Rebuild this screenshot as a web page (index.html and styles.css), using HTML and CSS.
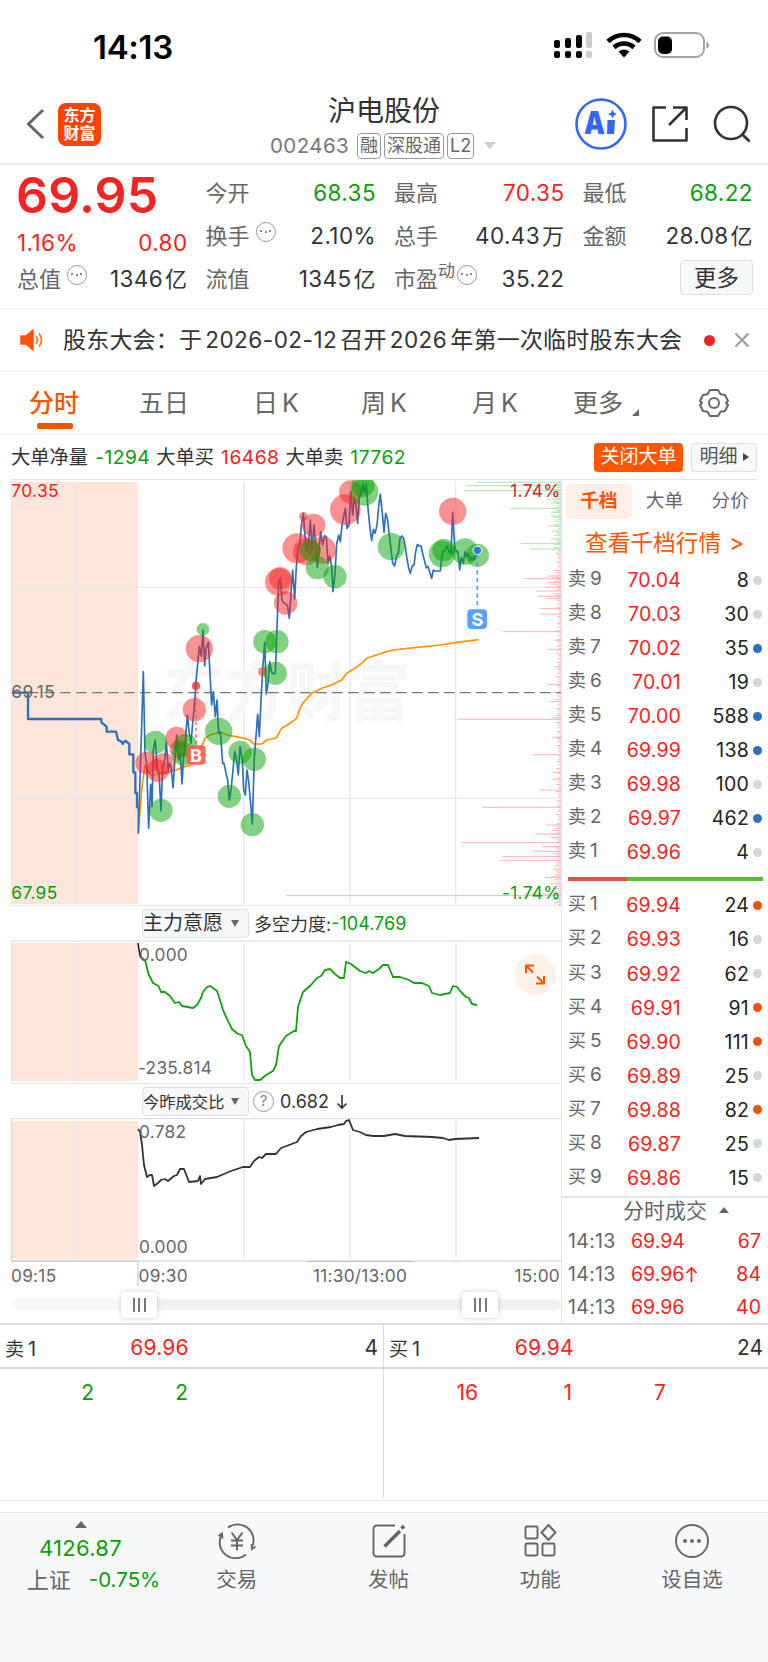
FILE: index.html
```html
<!DOCTYPE html>
<html lang="zh-CN">
<head>
  <meta charset="UTF-8">
  <title>沪电股份 002463</title>
  <meta name="viewport" content="width=device-width, initial-scale=1.0">
  <link rel="stylesheet" href="styles.css">
</head>
<body>
<div class="status-bar">
  <span class="clock">14:13</span>
  <svg class="status-icons" width="160" height="30" viewBox="0 0 160 30">
    <g fill="#000">
      <rect x="1" y="10" width="6" height="8" rx="2"/><rect x="12" y="8" width="6" height="10" rx="2"/><rect x="23" y="5" width="6" height="13" rx="2"/>
      <rect x="1" y="21" width="6" height="7" rx="2"/><rect x="12" y="21" width="6" height="7" rx="2"/><rect x="23" y="21" width="6" height="7" rx="2"/>
    </g>
    <g fill="#ccc"><rect x="33" y="2" width="6" height="16" rx="2"/><rect x="33" y="21" width="6" height="7" rx="2"/></g>
    <g fill="none" stroke="#000" stroke-width="4.6">
      <path d="M55 11.500a23 23 0 0 1 32 0"/>
      <path d="M61 17.500a14.500 14.500 0 0 1 20 0"/>
    </g>
    <path d="M65.500 21.500a9 9 0 0 1 11 0L71 27.500z"/>
    <rect x="102" y="3" width="49" height="24" rx="8" fill="none" stroke="#a3a3a3" stroke-width="2"/>
    <rect x="105" y="6.500" width="14" height="17.500" rx="5"/>
    <path d="M153.500 11.500q5 3.500 0 7.500z" fill="#999"/>
  </svg>
</div>

<div class="header">
  <svg class="back" width="20" height="32" viewBox="0 0 20 32"><path d="M17 2L2.500 16 17 30" fill="none" stroke="#666" stroke-width="3"/></svg>
  <div class="logo"><span>东方</span><span>财富</span></div>
  <div class="title">
    <h1>沪电股份</h1>
    <div class="sub"><span class="code">002463</span><span class="tag">融</span><span class="tag">深股通</span><span class="tag">L2</span><i class="tri-down"></i></div>
  </div>
  <div class="tools">
    <svg width="52" height="52" viewBox="0 0 52 52">
      <circle cx="26" cy="26" r="24.500" fill="none" stroke="#36f" stroke-width="2.600"/>
      <text x="9" y="36" class="ai-text" textLength="21" lengthAdjust="spacingAndGlyphs">A</text>
      <path d="M32.500 22h7.500l-1 14h-7z" fill="#36f"/>
      <path d="M37.500 11.500l1.400 3.100 3.100 1.400-3.100 1.400-1.400 3.100-1.400-3.100-3.100-1.400 3.100-1.400z" fill="#36f"/>
    </svg>
    <svg width="38" height="38" viewBox="0 0 38 38" fill="none" stroke="#333" stroke-width="2.600" stroke-linejoin="round">
      <path d="M15 2.500H2.500V35.500H35.500V23M22 2.500H35.500V15M35 3L18 20"/>
    </svg>
    <svg width="38" height="38" viewBox="0 0 38 38" fill="none" stroke="#333" stroke-width="2.600">
      <circle cx="18" cy="18" r="16"/><path d="M29 29l7.500 7.500"/>
    </svg>
  </div>
</div>

<div class="quote">
  <div class="col">
    <div class="price red">69.95</div>
    <div class="row change red"><span>1.16%</span><span>0.80</span></div>
    <div class="row"><label>总值<i class="more-dot"></i></label><span>1346<em>亿</em></span></div>
  </div>
  <div class="col">
    <div class="row"><label>今开</label><span class="green">68.35</span></div>
    <div class="row"><label>换手<i class="more-dot"></i></label><span>2.10%</span></div>
    <div class="row"><label>流值</label><span>1345<em>亿</em></span></div>
  </div>
  <div class="col">
    <div class="row"><label>最高</label><span class="red">70.35</span></div>
    <div class="row"><label>总手</label><span>40.43<em>万</em></span></div>
    <div class="row"><label>市盈<sup>动</sup><i class="more-dot tight"></i></label><span>35.22</span></div>
  </div>
  <div class="col">
    <div class="row"><label>最低</label><span class="green">68.22</span></div>
    <div class="row"><label>金额</label><span>28.08<em>亿</em></span></div>
    <div class="row end"><button class="btn-more">更多</button></div>
  </div>
</div>

<div class="notice">
  <svg width="25" height="22" viewBox="0 0 25 22"><path d="M1 7h5l7-6v20l-7-6H1z" fill="#ff5500" stroke="#ff5500" stroke-width="1.500" stroke-linejoin="round"/><path d="M16 7q3 4 0 8M19 4.500q5 6.500 0 13" fill="none" stroke="#ff7a33" stroke-width="1.800"/></svg>
  <p>股东大会：于<b>2026-02-12</b>召开<b>2026</b>年第一次临时股东大会</p>
  <i class="red-dot"></i>
  <svg width="16" height="16" viewBox="0 0 16 16"><path d="M1.500 1.500l13 13M14.500 1.500l-13 13" stroke="#999" stroke-width="1.800"/></svg>
</div>

<div class="tabs">
  <a class="active">分时</a><a>五日</a><a>日<b>K</b></a><a>周<b>K</b></a><a>月<b>K</b></a><a class="drop">更多</a>
  <svg width="30" height="30" viewBox="0 0 30 30" fill="none" stroke="#666" stroke-width="2" stroke-linejoin="round">
    <path d="M11 2h8l2.500 4.200 4.500.8 3 6-2 2 2 2-3 6-4.500.8L19 28h-8l-2.500-4.200-4.500-.8-3-6 2-2-2-2 3-6 4.500-.8z"/><circle cx="15" cy="15" r="5"/>
  </svg>
</div>

<div class="big-order">
  <span>大单净量</span><b class="green">-1294</b><span>大单买</span><b class="red">16468</b><span>大单卖</span><b class="green">17762</b>
  <button class="btn-close">关闭大单</button><button class="btn-detail">明细<i></i></button>
</div>

<div class="board">
  <div class="charts">
    <!-- price chart, drawn in thirds of a pixel -->
    <svg class="chart" width="561" height="426" viewBox="0 30 1683 1278">
      <rect x="34" y="36" width="380" height="1266" fill="#fce6da"/>
      <path d="M224 36V1302M732 36V1302M1050 36V1302M1367 36V1302M34 352H1683M34 985H1683" stroke="#e4e8f0" stroke-width="4" fill="none"/>
      <path d="M34 30V1308M34 1306H1683" stroke="#e2e4ea" stroke-width="3" fill="none"/>
      <text x="488" y="738" class="watermark" textLength="742" lengthAdjust="spacingAndGlyphs">东方财富</text>
      <g id="bars" fill="none" stroke-width="3"></g>
      <path d="M36 668H1683" stroke="#777" stroke-width="4" stroke-dasharray="32 16" fill="none"/>
      <polyline class="avg" points="415,1088 425,960 435,885 445,905 455,918 470,912 490,908 510,905 530,900 545,892 570,887 590,870 605,830 615,805 630,795 660,787 690,797 720,802 750,810 760,822 785,822 800,810 828,804 845,775 862,765 890,745 900,715 910,698 935,670 965,655 995,645 1025,630 1040,610 1060,598 1085,580 1100,565 1120,558 1150,548 1180,540 1250,532 1320,525 1370,517 1436,509"/>
      <polyline class="line pre" points="36,668 84,668 84,747 304,747 304,757 320,770 320,785 348,785 354,810 365,815 368,822 376,812 388,822 388,853 400,853 400,907 406,907 406,969 411,969 411,1011 415,1013"/>
      <polyline class="line" points="415,1013 415,1090 430,605 435,850 440,880 446,1075 452,943 456,1010 460,840 466,810 472,900 477,910 483,1022 488,885 493,880 499,817 505,900 509,880 514,895 519,953 524,880 530,795 536,870 541,850 546,942 551,860 557,800 562,735 568,790 573,820 578,760 583,710 588,635 598,530 604,558 609,480 614,588 618,535 621,530 625,517 635,705 640,665 646,740 651,690 656,790 661,785 668,880 672,880 678,910 683,930 688,990 693,960 699,900 704,845 709,865 715,915 720,830 727,870 731,960 736,975 741,900 746,935 751,990 757,1063 763,860 768,800 773,733 778,800 783,690 788,600 794,517 799,672 804,640 809,575 814,605 820,612 826,610 830,500 836,335 841,325 846,390 852,400 858,402 863,410 868,445 873,370 878,300 884,387 889,290 894,235 900,220 904,165 910,130 915,200 920,245 926,215 931,150 936,240 942,165 947,230 952,293 957,240 962,185 968,225 974,197 979,200 984,280 989,258 995,290 999,365 1005,310 1010,222 1016,195 1021,215 1026,165 1036,115 1041,175 1047,165 1052,65 1058,135 1063,85 1068,105 1073,160 1078,80 1084,70 1089,40 1094,70 1099,40 1104,115 1110,175 1115,212 1120,178 1125,190 1131,165 1136,110 1141,72 1147,130 1152,187 1157,130 1163,150 1168,195 1178,280 1184,288 1190,255 1195,250 1200,205 1205,198 1211,205 1216,230 1220,260 1226,295 1231,310 1236,290 1242,285 1247,245 1252,223 1258,228 1263,228 1268,250 1273,270 1279,293 1284,290 1289,305 1295,325 1300,300 1305,303 1321,303 1326,255 1332,242 1342,228 1347,245 1353,250 1358,127 1364,230 1369,245 1374,245 1379,300 1384,262 1390,280 1395,245 1400,260 1405,250 1411,270 1416,262 1421,270 1426,255 1432,242"/>
      <g id="trades"></g>
      <path d="M588 660V825" stroke="#ff5b4d" stroke-width="4" stroke-dasharray="10 9"/>
      <rect x="559" y="826" width="58" height="58" rx="12" fill="#fa5c50" fill-opacity=".9"/>
      <text x="588" y="876" class="mark">B</text>
      <path d="M1432 255V417" stroke="#5b9fff" stroke-width="5" stroke-dasharray="13 10"/>
      <circle cx="1432" cy="241" r="13" fill="#2483d0" stroke="#fff" stroke-width="3"/>
      <rect x="1402" y="418" width="59" height="59" rx="12" fill="#5b9fff"/>
      <text x="1432" y="468" class="mark">S</text>
      <g class="label">
        <text x="34" y="81" fill="#f52323">70.35</text>
        <text x="34" y="685" fill="#666">69.15</text>
        <text x="34" y="1287" fill="#0a9d0a">67.95</text>
        <text x="1682" y="81" fill="#d92323" text-anchor="end">1.74%</text>
        <text x="1682" y="1287" fill="#0a9d0a" text-anchor="end">-1.74%</text>
      </g>
    </svg>

    <div class="indicator">
      <button class="select">主力意愿<i></i></button><span class="name">多空力度:</span><b class="green">-104.769</b>
    </div>
    <svg class="chart" width="561" height="145" viewBox="0 940 561 145">
      <rect x="11" y="943" width="127" height="138" fill="#fce6da"/>
      <path d="M74.500 943V1081M244 943V1081M350 943V1081M456 943V1081" stroke="#e4e8f0" stroke-width="1.400"/>
      <path d="M11 941H561" stroke="#e2e4ea" stroke-width="1.500"/>
      <path d="M11 1083.500H561M11.500 941V1083" stroke="#e2e4ea"/>
      <path d="M138 943L140 956 144 960" stroke="#222" stroke-width="1.600" fill="none"/>
      <polyline class="force" points="140,957 145,960 148.500,974 153,983 158.500,986 161,992 165,992 170,996 175,1003 179,1002 182,1006 193,1008 197,1005 201,998 203,992 207,987 210,986 213,988 217,991 220,1000 223,1010 228,1021 232,1029 238,1034 242,1035 246,1046 250,1052 252,1075 255,1080 260,1080 266,1075 273,1071 276,1065 279,1046 286,1036 294,1031 296,1031 298,1007 303,992 311,985 317,978 321,976 325,970 330,969 335,974 340,978 344,978 346,962 351,964 360,971 366,973 369,971 373,973 379,969 383,965 388,965 393,977 400,977 409,980 414,983 422,983 429,986 432,993 440,995 450,993 453,986 457,987 461,992 466,997 469,998 472,1004 477,1005"/>
      <text x="139" y="960.500" class="axis">0.000</text>
      <text x="138" y="1074" class="axis">-235.814</text>
      <circle cx="535" cy="974.500" r="20.500" fill="#fff0e9"/>
      <path d="M526 973V965.500H534M526.500 966L533 972.500M544 976V983.500H536M543.500 983L537 976.500" fill="none" stroke="#f50" stroke-width="2"/>
    </svg>

    <div class="indicator second">
      <button class="select small">今昨成交比<i></i></button><span class="help">?</span><b>0.682</b>
      <svg width="12" height="16" viewBox="0 0 12 16"><path d="M6 1V14M1.500 9.500L6 14l4.500-4.500" fill="none" stroke="#333" stroke-width="1.600"/></svg>
    </div>
    <svg class="chart" width="561" height="170" viewBox="0 1118 561 170">
      <rect x="11" y="1121" width="127" height="138" fill="#fce6da"/>
      <path d="M74.500 1121V1259M244 1121V1259M350 1121V1259M456 1121V1259" stroke="#e4e8f0" stroke-width="1.400"/>
      <path d="M11 1118.500H561M11.500 1118V1260M11 1261H561" stroke="#dcdfe5" stroke-width="1.500"/>
      <path d="M11 1261H138V1286M307 1261.500H414" stroke="#bfc2c8" fill="none"/>
      <polyline class="ratio" points="138,1129 140,1132 142,1145 144,1165 147,1177 150,1175 152,1175 154,1186 158,1183 161,1180 165,1179 168,1181 174,1176 177,1175 180,1169 184,1169 189,1182 198,1181 200,1176 201,1184 205,1179 217,1177 231,1171 243,1167 250,1167 254,1161 259,1157 262,1158 266,1154 276,1154 281,1148 297,1142 301,1136 306,1132 317,1129 331,1127 338,1125 344,1124 346,1121 349,1120 353,1130 360,1132 366,1135 373,1136 384,1136 395,1134 405,1136 432,1137 443,1138 449,1140 455,1139 479,1138"/>
      <g class="axis">
        <text x="139" y="1138">0.782</text>
        <text x="139" y="1253">0.000</text>
        <text x="11" y="1282">09:15</text>
        <text x="138.500" y="1282">09:30</text>
        <text x="360" y="1282" text-anchor="middle">11:30/13:00</text>
        <text x="560" y="1282" text-anchor="end">15:00</text>
      </g>
    </svg>
    <div class="slider"><span class="handle"><i></i><i></i><i></i></span><span class="handle"><i></i><i></i><i></i></span></div>
  </div>

  <div class="side">
    <div class="side-tabs"><a class="active">千档</a><a>大单</a><a>分价</a></div>
    <div class="link">查看千档行情<b>&gt;</b></div>
    <div id="sells"></div>
    <div class="ratio-bar"></div>
    <div id="buys"></div>
    <div class="ticks-title">分时成交<i></i></div>
    <div class="tick"><span>14:13</span><b>69.94</b><b class="qty">67</b></div>
    <div class="tick"><span>14:13</span><b>69.96<svg width="13" height="17" viewBox="0 0 13 17"><path d="M6.500 16V2M1.500 7l5-5 5 5" fill="none" stroke="#f52323" stroke-width="1.700"/></svg></b><b class="qty">84</b></div>
    <div class="tick"><span>14:13</span><b>69.96</b><b class="qty">40</b></div>
  </div>
</div>

<div class="queue">
  <div class="half">
    <div class="queue-head"><span>卖<b>1</b></span><b class="red">69.96</b><b>4</b></div>
    <div class="queue-body green"><span>2</span><span>2</span><span></span><span></span></div>
  </div>
  <div class="half">
    <div class="queue-head"><span>买<b>1</b></span><b class="red">69.94</b><b>24</b></div>
    <div class="queue-body red"><span>16</span><span>1</span><span>7</span><span></span></div>
  </div>
</div>

<div class="bottom-nav">
  <div class="index">
    <i class="tri-up"></i>
    <b>4126.87</b>
    <div><span>上证</span><b>-0.75%</b></div>
  </div>
  <div class="nav-item">
    <svg width="40" height="36" viewBox="0 0 40 36" fill="none" stroke="#666" stroke-width="1.900">
      <path d="M11 4.500A16 16 0 0 1 35.500 23M29 31.500A16 16 0 0 1 5 11"/><path d="M1.500 13L5 10.500l.500 5M38.500 23.500l-3.500 2.500-.500-5"/>
      <path d="M14.500 9.500L20 17l5.500-7.500M20 17V27.500M14 17.500H26M14 22.500H26"/>
    </svg>交易
  </div>
  <div class="nav-item">
    <svg width="36" height="36" viewBox="0 0 36 36" fill="none" stroke="#666" stroke-width="1.900">
      <path d="M24 2.500H6Q2.500 2.500 2.500 6V30Q2.500 33.500 6 33.500H30Q33.500 33.500 33.500 30V11"/><path d="M13.500 23.500L29 8" stroke-width="3.600"/><path d="M30.500 5.500L33 3" stroke-width="3.600"/>
    </svg>发帖
  </div>
  <div class="nav-item">
    <svg width="36" height="36" viewBox="0 0 36 36" fill="none" stroke="#666" stroke-width="1.900" stroke-linejoin="round">
      <rect x="3.500" y="3.500" width="12" height="12" rx="1.500"/><rect x="3.500" y="20.500" width="12" height="12" rx="1.500"/><rect x="20.500" y="20.500" width="12" height="12" rx="1.500"/><path d="M26.500 2l7 7.500-7 7.500-7-7.500z"/>
    </svg>功能
  </div>
  <div class="nav-item">
    <svg width="36" height="36" viewBox="0 0 36 36"><circle cx="18" cy="18" r="16" fill="none" stroke="#666" stroke-width="1.900"/><g fill="#666"><circle cx="11" cy="18" r="1.900"/><circle cx="18" cy="18" r="1.900"/><circle cx="25" cy="18" r="1.900"/></g></svg>设自选
  </div>
</div>

<script>
  // [price, quantity, dot]
  const sells = [
    ["70.04", 8, ""], ["70.03", 30, ""], ["70.02", 35, "blue"],
    ["70.01", 19, ""], ["70.00", 588, "blue"], ["69.99", 138, "blue"],
    ["69.98", 100, ""], ["69.97", 462, "blue"], ["69.96", 4, ""]
  ];
  const buys = [
    ["69.94", 24, "orange"], ["69.93", 16, ""], ["69.92", 62, ""],
    ["69.91", 91, "orange"], ["69.90", 111, "orange"], ["69.89", 25, ""],
    ["69.88", 82, "orange"], ["69.87", 25, ""], ["69.86", 15, ""]
  ];

  function level(name, n, d) {
    return `<div class="level"><span>${name}<b>${n}</b></span><b class="red">${d[0]}</b><b>${d[1]}</b><i class="${d[2]}"></i></div>`;
  }

  document.getElementById("sells").innerHTML = sells.map((d, i) => level("卖", 9 - i, d)).join("");
  document.getElementById("buys").innerHTML = buys.map((d, i) => level("买", i + 1, d)).join("");

  // big trades on the price line: x, y, r
  const redTrades = [
    [440, 879, 34], [472, 902, 34], [492, 882, 33], [530, 804, 34], [537, 838, 28], [583, 719, 35],
    [588, 647, 12], [588, 647, 12], [598, 536, 41], [788, 605, 14], [836, 336, 41], [841, 325, 34],
    [857, 399, 35], [892, 235, 45], [910, 139, 13], [941, 166, 35], [920, 245, 41], [967, 240, 41],
    [1036, 119, 46], [1052, 66, 35], [1358, 124, 41]
  ];
  const greenTrades = [
    [466, 817, 35], [483, 1021, 35], [550, 852, 35], [557, 826, 35], [609, 478, 19], [656, 784, 41],
    [688, 979, 35], [720, 847, 35], [757, 1064, 35], [763, 868, 35], [794, 515, 35], [831, 515, 35],
    [826, 610, 35], [931, 241, 32], [952, 293, 35], [1005, 320, 35], [1089, 46, 35], [1094, 66, 41],
    [1174, 230, 41], [1326, 252, 40], [1331, 240, 34], [1395, 245, 40], [1432, 256, 35]
  ];
  const circle = c => `<circle cx="${c[0]}" cy="${c[1]}" r="${c[2]}"/>`;
  document.getElementById("trades").innerHTML =
    `<g class="buy">${redTrades.map(circle).join("")}</g><g class="sell">${greenTrades.map(circle).join("")}</g>`;

  // price distribution on the right edge: y, length
  const peaks = [
    [37, 252], [47, 285], [62, 290], [73, 40], [89, 42], [99, 30], [115, 153], [126, 30], [141, 28], [168, 38],
    [221, 120], [237, 93], [318, 40], [326, 113], [338, 38], [352, 48], [363, 75], [379, 69], [385, 40],
    [416, 62], [432, 62], [485, 174], [511, 20], [538, 42], [590, 20], [643, 40], [668, 25], [695, 32],
    [743, 30], [748, 310], [802, 25], [854, 84], [907, 25], [928, 25], [960, 66], [1012, 235], [1065, 44],
    [1092, 78], [1118, 298], [1130, 58], [1144, 84], [1160, 175], [1171, 184], [1223, 48], [1272, 110], [1277, 825]
  ];
  const small = [8, 14, 22, 10, 18, 6, 26, 12, 9, 16, 5, 20, 13];
  let bars = peaks.map(p => [p[0], p[1]]);
  for (let y = 37, i = 0; y < 1305; y += 5.3, i++) {
    const busy = y < 250 || (y > 300 && y < 390) || y > 1060;
    bars.push([y, small[i % 13] * (busy ? 1.2 : 0.6)]);
  }
  document.getElementById("bars").innerHTML = bars.map(b =>
    `<path d="M1683 ${b[0]}h${-b[1]}" stroke="${b[0] < 245 ? "#b0e2b0" : "#fbb4b7"}"/>`).join("");
</script>
</body>
</html>
```

FILE: styles.css
```css
* {
  box-sizing: border-box;
}

body {
  margin: 0;
  width: 768px;
  height: 1662px;
  overflow: hidden;
  background: #fff;
  color: #333;
  font-family: Inter, "Noto Sans CJK SC", sans-serif;
}

b, em, i {
  font-weight: normal;
  font-style: normal;
}

svg {
  display: block;
  flex: none;
}

button {
  font-family: inherit;
  padding: 0;
}

.red { color: #f52323; }
.green { color: #0a9d0a; }

/* status bar */
.status-bar {
  display: flex;
  justify-content: space-between;
  height: 88px;
  padding: 30px 55px 0 93px;
}

.clock {
  font-size: 33px;
  line-height: 34px;
  font-weight: 600;
  color: #000;
  letter-spacing: -.3px;
}

/* header */
.header {
  display: flex;
  align-items: center;
  height: 77px;
  padding: 0 17px 3px 26px;
  border-bottom: 2px solid #ededed;
}

.logo {
  display: flex;
  flex-direction: column;
  justify-content: center;
  width: 43px;
  height: 43px;
  margin-left: 12px;
  border-radius: 8px;
  background: #ff4200;
  color: #fff;
  font-size: 16px;
  line-height: 18px;
  font-weight: 700;
  text-align: center;
}

.title {
  width: 300px;
  margin-left: 141px;
  padding-left: 28px;
}

.title h1 {
  margin: 0;
  padding: 3px 44px 0 0;
  font-size: 28px;
  line-height: 40px;
  font-weight: 400;
  text-align: center;
}

.sub {
  display: flex;
  align-items: center;
  height: 30px;
  color: #666;
}

.code {
  width: 84px;
  font-size: 20.500px;
  letter-spacing: .4px;
  color: #777;
}

.tag {
  height: 26px;
  margin-left: 3px;
  padding: 0 2px;
  border: 1.500px solid #999;
  border-radius: 4px;
  font-size: 18px;
  line-height: 24px;
  white-space: nowrap;
}

.tri-down {
  margin-left: 10px;
  border: 6.500px solid transparent;
  border-top: 7px solid #ccc;
  border-bottom: 0;
}

.tools {
  display: flex;
  align-items: center;
  gap: 24px;
  margin-left: auto;
}

.ai-text {
  font: 900 31px Inter, sans-serif;
  fill: #36f;
}

/* quote */
.quote {
  display: grid;
  grid-template-columns: repeat(4, 1fr);
  gap: 18px;
  height: 145px;
  padding: 6px 15px 0 17px;
  border-bottom: 2px solid #f5f5f5;
  font-size: 22.500px;
}

.row {
  display: flex;
  align-items: center;
  justify-content: space-between;
  height: 43px;
  line-height: 30px;
  white-space: nowrap;
}

.row > span {
  letter-spacing: .4px;
}

.row.end {
  justify-content: flex-end;
}

.row label {
  display: flex;
  align-items: center;
  color: #666;
  font-size: 22px;
}

.row em {
  margin-left: 2px;
  font-size: 22px;
}

.price {
  height: 57px;
  line-height: 49px;
  font-size: 50px;
  font-weight: 600;
  letter-spacing: .2px;
  margin-left: -1px;
}

.row.change {
  height: 29px;
}

.row sup {
  font-size: 17px;
  line-height: 16px;
  margin-top: -16px;
  vertical-align: baseline;
}

.more-dot {
  width: 20px;
  height: 20px;
  margin: -8px 0 0 6px;
  border: 1.500px solid #999;
  border-radius: 50%;
  background: radial-gradient(circle, #888 1px, transparent 1.500px) center / 4px 4px no-repeat,
    radial-gradient(circle, #888 1px, transparent 1.500px) 2px 6.500px / 4px 4px no-repeat,
    radial-gradient(circle, #888 1px, transparent 1.500px) 11px 6.500px / 4px 4px no-repeat;
}

.more-dot.tight {
  margin-left: 2px;
}

.btn-more {
  width: 73px;
  height: 35px;
  margin-top: -2px;
  border: 1.500px solid #dcdfe8;
  border-radius: 4px;
  background: #f7f8fa;
  color: #333;
  font-size: 22.500px;
  line-height: 30px;
}

/* notice */
.notice {
  display: flex;
  align-items: center;
  height: 62px;
  padding: 0 18px 0 20px;
  border-bottom: 2px solid #f7f7f7;
}

.notice p {
  width: 628px;
  margin: 0 0 0 18px;
  font-size: 23px;
  line-height: 30px;
  letter-spacing: .2px;
  white-space: nowrap;
}

.notice p b {
  margin: 0 3px 0 3px;
  font-size: 22.500px;
  letter-spacing: .5px;
}

.red-dot {
  width: 11px;
  height: 11px;
  margin: 0 auto 0 13px;
  border-radius: 50%;
  background: #f52323;
}

/* period tabs */
.tabs {
  display: grid;
  grid-template-columns: 110px 114px 108px 111px 101px 126px 30px;
  align-items: center;
  height: 63px;
  padding: 0 0 0 29px;
  border-bottom: 2px solid #f5f5f5;
}

.tabs a {
  position: relative;
  color: #666;
  font-size: 25px;
  line-height: 34px;
}

.tabs a b {
  margin-left: 4px;
}

.tabs .active {
  color: #f25500;
  font-weight: 500;
}

.tabs .active::after {
  content: "";
  position: absolute;
  left: 8px;
  bottom: -9px;
  width: 36px;
  height: 6px;
  border-radius: 2px;
  background: #f25500;
}

.tabs .drop::after {
  content: "";
  position: absolute;
  left: 59px;
  bottom: 4px;
  border-left: 7px solid transparent;
  border-bottom: 7px solid #666;
}

/* big order summary */
.big-order {
  display: flex;
  align-items: center;
  height: 44px;
  padding: 0 11px 0 11px;
  font-size: 19.300px;
  line-height: 28px;
  white-space: nowrap;
}

.big-order > b {
  margin: 0 6px 0 7px;
  letter-spacing: .45px;
}

.btn-close {
  width: 89px;
  height: 29px;
  margin-left: auto;
  border: 0;
  border-radius: 4px;
  background: #f50;
  color: #fff;
  font-size: 19px;
  line-height: 28px;
}

.btn-detail {
  display: flex;
  align-items: center;
  justify-content: center;
  width: 66px;
  height: 29px;
  margin-left: 8px;
  border: 1.500px solid #dcdfe8;
  border-radius: 4px;
  background: #f7f8fa;
  color: #555;
  font-size: 19px;
  line-height: 26px;
}

.btn-detail i {
  margin-left: 5px;
  border: 4px solid transparent;
  border-left: 6px solid #444;
  border-right: 0;
}

/* charts */
.board {
  display: flex;
  height: 844px;
  background: linear-gradient(#e2e4ea, #e2e4ea) 11px 0 / 746px 1px no-repeat;
}

.charts {
  width: 562px;
  padding-top: 1px;
  border-right: 1px solid #e2e4ea;
}

.line, .avg, .force, .ratio {
  fill: none;
  stroke-linejoin: round;
}

.line { stroke: #2d70bd; stroke-width: 5; }
.line.pre { stroke-width: 7; }
.avg { stroke: #ff9500; stroke-width: 5; }
.force { stroke: #0fa00f; stroke-width: 1.800; }
.ratio { stroke: #333; stroke-width: 1.800; }

.buy { fill: #f52323; fill-opacity: .5; }
.sell { fill: #08a408; fill-opacity: .5; }

.watermark {
  font: 700 196px "Noto Sans CJK SC", sans-serif;
  fill: #f7f7f7;
}

.mark {
  font: 700 54px Inter, sans-serif;
  fill: #fff;
  text-anchor: middle;
}

.label {
  font-size: 52px;
  letter-spacing: 1px;
}

.axis {
  font-size: 17.300px;
  letter-spacing: .25px;
  fill: #666;
}

.indicator {
  display: flex;
  align-items: center;
  height: 34px;
  padding: 0 0 0 142px;
  font-size: 18px;
}

.indicator.second {
  height: 33px;
}

.indicator .name {
  margin-left: 5px;
}

.select {
  display: flex;
  align-items: center;
  justify-content: space-between;
  width: 107px;
  height: 29px;
  padding: 0 9px 0 0;
  border: 1.500px solid #dcdfe8;
  border-radius: 4px;
  background: #f7f8fa;
  color: #333;
  font-size: 20px;
  line-height: 26px;
}

.select.small {
  font-size: 16.300px;
}

.select i {
  border: 4px solid transparent;
  border-top: 7px solid #666;
  border-bottom: 0;
}

.help {
  width: 21px;
  height: 21px;
  margin: 0 6px 0 4px;
  border: 1.500px solid #999;
  border-radius: 50%;
  color: #888;
  font-size: 15px;
  line-height: 18px;
  text-align: center;
}

.indicator.second svg {
  margin-left: 7px;
}

.slider {
  display: flex;
  align-items: center;
  height: 11px;
  margin: 11px 0 0 11px;
  border-radius: 6px;
  background: linear-gradient(90deg, #f8f8f9 110px, #f1f1f4 110px);
}

.handle {
  display: flex;
  align-items: center;
  justify-content: center;
  gap: 3.500px;
  width: 36px;
  height: 26px;
  margin-left: 110px;
  border-radius: 4px;
  background: #fff;
  box-shadow: 0 0 5px rgba(0, 0, 0, .2);
}

.handle + .handle {
  margin-left: 305px;
}

.handle i {
  width: 2px;
  height: 14px;
  background: #777;
}

/* order book */
.side {
  width: 206px;
  padding: 5px 5px 0 4px;
}

.side-tabs {
  display: flex;
  height: 35px;
  font-size: 18.700px;
  line-height: 34px;
  color: #666;
}

.side-tabs a {
  width: 66px;
  text-align: center;
}

.side-tabs .active {
  border-radius: 5px;
  background: #ffeee6;
  color: #f50;
  font-weight: 700;
}

.link {
  height: 44px;
  padding-left: 19px;
  font-size: 22.700px;
  line-height: 48px;
  color: #f50;
  white-space: nowrap;
}

.link b {
  margin-left: 8px;
}

.level {
  display: flex;
  align-items: center;
  height: 34.050px;
  font-size: 19.500px;
}

.level span {
  width: 42px;
  padding-left: 2px;
  color: #666;
  font-size: 18px;
  line-height: 26px;
  margin-top: -2px;
  white-space: nowrap;
}

.level span b {
  margin-left: 4px;
  font-size: 19px;
}

.level > b {
  width: 73px;
  text-align: right;
  letter-spacing: .2px;
}

.level > b + b {
  width: 68px;
  color: #222;
}

.level i {
  width: 9px;
  height: 9px;
  margin-left: 4px;
  border-radius: 50%;
  background: #d3d6dd;
}

.level .blue { background: #2d70bd; }
.level .orange { background: #ea5504; }

.ratio-bar {
  height: 4px;
  margin: 8px 0 7px 2px;
  background: linear-gradient(90deg, #ee4b4b 59px, #5cb942 59px);
}

.ticks-title {
  height: 29px;
  margin: 1px -5px 0 -4px;
  padding-left: 61px;
  border-top: 2px solid #e2e4ea;
  font-size: 21px;
  line-height: 26px;
  color: #666;
}

.ticks-title i {
  display: inline-block;
  margin-left: 12px;
  border: 5px solid transparent;
  border-bottom: 6px solid #666;
  border-top: 0;
  vertical-align: 5px;
}

.tick {
  display: flex;
  align-items: center;
  height: 33px;
  padding: 0 2px;
  color: #f52323;
  font-size: 19.500px;
}

.tick span {
  width: 63px;
  color: #666;
  font-size: 19.500px;
  letter-spacing: .3px;
}

.tick svg {
  display: inline-block;
  margin-left: 1px;
  vertical-align: -2px;
}

.tick .qty {
  margin-left: auto;
}

/* level 2 queue */
.queue {
  display: flex;
  height: 178px;
  padding-bottom: 2px;
  border-top: 2px solid #d9dce3;
  border-bottom: 1.500px solid #e8eaee;
}

.half {
  width: 384px;
  font-size: 21px;
}

.half:first-child {
  border-right: 1.500px solid #d9dce3;
}

.queue-head {
  display: grid;
  grid-template-columns: 1fr 1fr 1fr;
  align-items: center;
  height: 44px;
  padding: 2px 5px 0;
  border-bottom: 2px solid #d9dce3;
}

.queue-head > span {
  font-size: 19px;
}

.queue-head span b {
  margin-left: 4px;
  font-size: 20px;
}

.queue-head .red {
  padding-left: 1px;
  letter-spacing: .2px;
}

.queue-head > b:last-child {
  text-align: right;
}

.queue-body {
  display: grid;
  grid-template-columns: repeat(4, 94px);
  padding-top: 11px;
  line-height: 25px;
  text-align: right;
}

/* bottom nav */
.bottom-nav {
  display: flex;
  height: 152px;
  margin-top: 11px;
  padding-top: 7px;
  border-top: 1.500px solid #e2e4e8;
  background: #f7f8fa;
  color: #666;
}

.index {
  display: flex;
  flex-direction: column;
  align-items: center;
  width: 161px;
  color: #0a9d0a;
  font-size: 22px;
  line-height: 32px;
}

.index > b {
  letter-spacing: .3px;
}

.tri-up {
  margin: 1px 0 4px;
  border: 6px solid transparent;
  border-bottom: 7px solid #666;
  border-top: 0;
}

.index div {
  display: flex;
  gap: 18px;
  margin-left: 26px;
  white-space: nowrap;
}

.index span {
  color: #666;
  font-size: 22px;
}

.index div b {
  font-size: 20.500px;
}

.nav-item {
  display: flex;
  flex-direction: column;
  align-items: center;
  width: 151.700px;
  padding-top: 3px;
  font-size: 20.500px;
  line-height: 42px;
}
```
